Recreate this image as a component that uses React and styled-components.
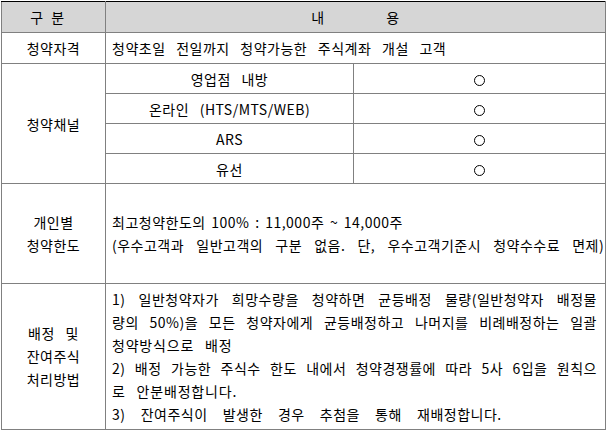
import React from "react";
import styled, { createGlobalStyle } from "styled-components";

const Global = createGlobalStyle`
  html, body { margin: 0; padding: 0; background: #fff; }
  body { font-family: "Noto Sans CJK KR", "Noto Sans", sans-serif; color: #000; }
`;

const Wrap = styled.div`
  padding: 1px 0 0 1px;
`;

const Table = styled.table`
  border-collapse: collapse;
  table-layout: fixed;
  width: 605px;
  border-top: 1px solid #000;
  border-left: 1px solid #000;
  border-right: 1px solid #000;
  border-bottom: 1px solid #808080;
  font-size: 14px;
  letter-spacing: 0.5px;
  word-spacing: 7px;
`;

const Row = styled.tr`
  height: ${(p) => p.$h}px;
`;

const HeadCell = styled.th`
  background: #d6d6d6;
  font-weight: normal;
  border: 1px solid #808080;
  border-top: 1px solid #000;
  padding: 0;
  text-align: center;
  line-height: 20px;
`;

const HeadLabel = styled.span`
  white-space: pre;
  word-spacing: ${(p) => p.$gap}px;
  position: relative;
  left: ${(p) => p.$shift || 0}px;
`;

const Cell = styled.td`
  border: 1px solid #808080;
  padding: 0 ${(p) => (p.$left ? "8px 0 6px" : "0")};
  text-align: ${(p) => (p.$left ? "left" : "center")};
  vertical-align: middle;
  line-height: ${(p) => p.$lh || 20}px;
  white-space: nowrap;
`;

const Line = styled.div`
  word-spacing: ${(p) => (p.$ws != null ? p.$ws : 7)}px;
  letter-spacing: ${(p) => (p.$ls != null ? p.$ls : 0.5)}px;
  text-align: left;
  text-align-last: ${(p) => (p.$justify ? "justify" : "left")};
`;

const Circle = styled.span`
  display: inline-block;
  width: 11px;
  height: 11px;
  border: 1px solid #000;
  border-radius: 50%;
  box-sizing: border-box;
  vertical-align: middle;
`;

const channels = ["영업점 내방", "온라인 (HTS/MTS/WEB)", "ARS", "유선"];

export default function App() {
  return (
    <>
      <Global />
      <Wrap>
        <Table>
          <colgroup>
            <col style={{ width: 104 }} />
            <col style={{ width: 248 }} />
            <col style={{ width: 252 }} />
          </colgroup>
          <tbody>
            <Row $h={31}>
              <HeadCell>
                <HeadLabel $gap={4} $shift={-6}>구 분</HeadLabel>
              </HeadCell>
              <HeadCell colSpan={2}>
                <HeadLabel $gap={58}>내 용</HeadLabel>
              </HeadCell>
            </Row>
            <Row $h={31}>
              <Cell>청약자격</Cell>
              <Cell $left colSpan={2}>
                청약초일 전일까지 청약가능한 주식계좌 개설 고객
              </Cell>
            </Row>
            {channels.map((c, i) => (
              <Row $h={30} key={c}>
                {i === 0 && <Cell rowSpan={4}>청약채널</Cell>}
                <Cell>{c}</Cell>
                <Cell>
                  <Circle />
                </Cell>
              </Row>
            ))}
            <Row $h={100}>
              <Cell $lh={23}>
                개인별
                <br />
                청약한도
              </Cell>
              <Cell $left $lh={23} colSpan={2}>
                <Line $ws={2}>최고청약한도의 100% : 11,000주 ~ 14,000주</Line>
                <Line $ws={8.5}>
                  (우수고객과 일반고객의 구분 없음. 단, 우수고객기준시 청약수수료 면제)
                </Line>
              </Cell>
            </Row>
            <Row $h={146}>
              <Cell $lh={23}>
                배정 및
                <br />
                잔여주식
                <br />
                처리방법
              </Cell>
              <Cell $left $lh={23} colSpan={2}>
                <Line $justify $ws={3}>
                  1) 일반청약자가 희망수량을 청약하면 균등배정 물량(일반청약자 배정물
                </Line>
                <Line $justify $ws={3}>
                  량의 50%)을 모든 청약자에게 균등배정하고 나머지를 비례배정하는 일괄
                </Line>
                <Line $ls={0.8} $ws={7}>청약방식으로 배정</Line>
                <Line $justify $ws={3}>
                  2) 배정 가능한 주식수 한도 내에서 청약경쟁률에 따라 5사 6입을 원칙으
                </Line>
                <Line $ls={0.8} $ws={7}>로 안분배정합니다.</Line>
                <Line $ws={11.5}>3) 잔여주식이 발생한 경우 추첨을 통해 재배정합니다.</Line>
              </Cell>
            </Row>
          </tbody>
        </Table>
      </Wrap>
    </>
  );
}
